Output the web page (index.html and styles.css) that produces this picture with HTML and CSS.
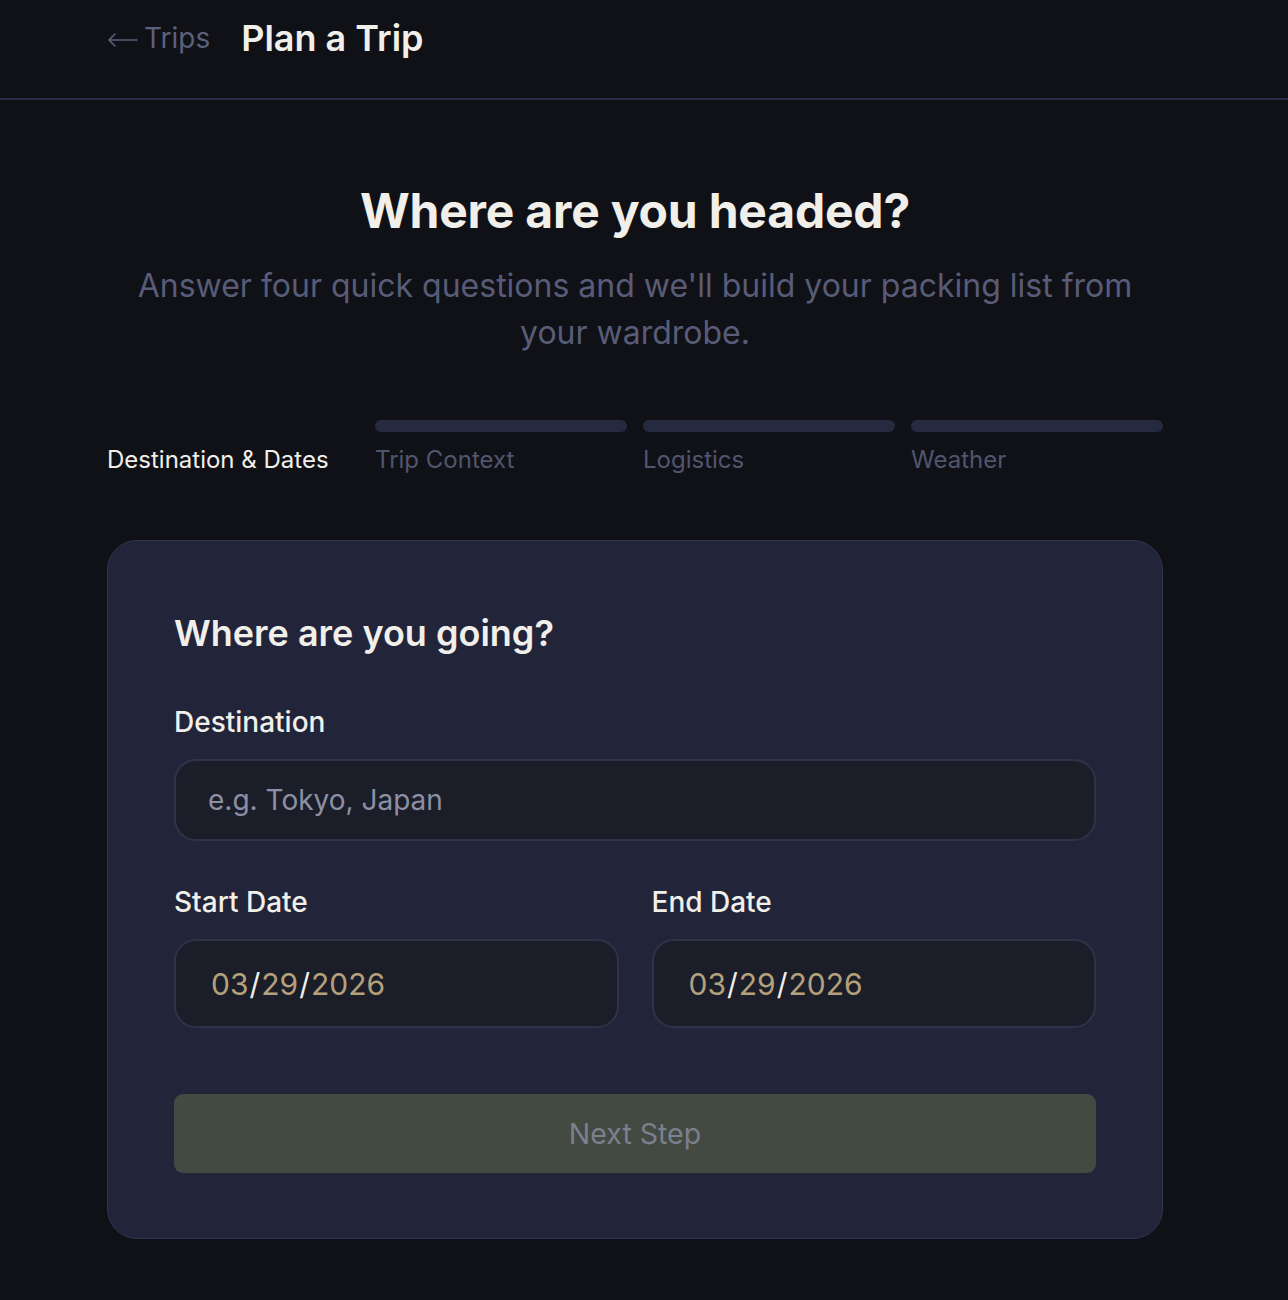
FILE: index.html
```html
<!DOCTYPE html>
<html lang="en">
<head>
<meta charset="utf-8">
<title>Plan a Trip</title>
<link rel="stylesheet" href="styles.css">
</head>
<body>
<header class="topbar">
  <div class="topbar-inner">
    <a class="back" href="#"><svg class="arrow" width="31" height="14" viewBox="0 0 31 14" aria-hidden="true"><path d="M30 7H2M8 1L2 7l6 6" fill="none" stroke="currentColor" stroke-width="1.6" stroke-linecap="round" stroke-linejoin="round"/></svg><span>Trips</span></a>
    <h1 class="page-title">Plan a Trip</h1>
  </div>
</header>
<main class="main">
  <section class="intro">
    <h2 class="intro-title">Where are you headed?</h2>
    <p class="intro-text">Answer four quick questions and we'll build your packing list from your wardrobe.</p>
  </section>
  <ol class="steps">
    <li class="step step-active"><span class="bar"></span><span class="step-label">Destination &amp; Dates</span></li>
    <li class="step"><span class="bar"></span><span class="step-label">Trip Context</span></li>
    <li class="step"><span class="bar"></span><span class="step-label">Logistics</span></li>
    <li class="step"><span class="bar"></span><span class="step-label">Weather</span></li>
  </ol>
  <form class="card">
    <h3 class="card-title">Where are you going?</h3>
    <div class="field">
      <label class="label" for="dest">Destination</label>
      <div class="input input-text" id="dest"><span class="placeholder">e.g. Tokyo, Japan</span></div>
    </div>
    <div class="row">
      <div class="field">
        <label class="label">Start Date</label>
        <div class="input input-date"><span class="d">03</span><span class="sl">/</span><span class="d">29</span><span class="sl">/</span><span class="d">2026</span></div>
      </div>
      <div class="field">
        <label class="label">End Date</label>
        <div class="input input-date"><span class="d">03</span><span class="sl">/</span><span class="d">29</span><span class="sl">/</span><span class="d">2026</span></div>
      </div>
    </div>
    <button type="button" class="next">Next Step</button>
  </form>
</main>
</body>
</html>
```

FILE: styles.css
```css
* { box-sizing: border-box; }
html, body { margin: 0; padding: 0; }
body {
  background: #101116;
  font-family: Inter, "Noto Sans", sans-serif;
  color: #f1efe9;
  width: 1288px;
  min-height: 1300px;
}
.topbar {
  height: 100px;
  border-bottom: 2px solid #2b2e44;
}
.topbar-inner {
  padding-left: 107px;
  height: 76px;
  display: flex;
  align-items: center;
  gap: 31px;
}
.back {
  color: #5b607c;
  text-decoration: none;
  font-size: 28px;
  display: flex;
  align-items: center;
  gap: 6px;
}
.arrow { display: block; margin-top: 3px; }
.page-title {
  margin: 0;
  font-size: 36px;
  font-weight: 600;
  color: #f1efe9;
  letter-spacing: 0;
}
.main {
  width: 1056px;
  margin-left: 107px;
}
.intro {
  text-align: center;
  padding-top: 82px;
}
.intro-title {
  margin: 0;
  font-size: 48px;
  font-weight: 700;
  line-height: 58px;
  color: #f1efe9;
  letter-spacing: -0.2px;
}
.intro-text {
  margin: 22px 0 0;
  font-size: 32px;
  line-height: 47px;
  color: #585c78;
  padding: 0 20px;
}
.steps {
  list-style: none;
  margin: 64px 0 0;
  padding: 0;
  display: grid;
  grid-template-columns: repeat(4, 1fr);
  gap: 16px;
}
.step {
  display: flex;
  flex-direction: column;
  gap: 14px;
}
.bar {
  display: block;
  height: 12px;
  border-radius: 6px;
  background: #252a40;
}
.step-active .bar { background: #101116; }
.step-label {
  font-size: 24px;
  color: #51556e;
  line-height: 28px;
}
.step-active .step-label { color: #f1efe9; }
.card {
  margin-top: 66px;
  background: #22253a;
  border: 1px solid #303450;
  border-radius: 30px;
  padding: 70px 66px 65px;
  display: flex;
  flex-direction: column;
}
.card-title {
  margin: 0;
  font-size: 36px;
  font-weight: 600;
  line-height: 44px;
  color: #f1efe9;
}
.field {
  display: flex;
  flex-direction: column;
  flex: 1;
}
.card-title + .field { margin-top: 52px; }
.label {
  font-size: 28px;
  font-weight: 500;
  line-height: 30px;
  color: #f1efe9;
}
.input {
  margin-top: 22px;
  background: #1b1d29;
  border: 2px solid #2f3249;
  border-radius: 22px;
  display: flex;
  align-items: center;
}
.input-text {
  height: 82px;
  padding-left: 32px;
}
.placeholder {
  font-size: 28px;
  color: #8c90a4;
}
.row {
  display: flex;
  gap: 33px;
  margin-top: 46px;
}
.input-date {
  height: 89px;
  padding-left: 35px;
  font-size: 30px;
  letter-spacing: 0;
}
.d { color: #b5a07c; }
.sl { color: #f1efe9; padding: 0 1px; }
.next {
  margin-top: 66px;
  height: 79px;
  border: none;
  border-radius: 9px;
  background: #434a42;
  color: #7b808e;
  font-family: Inter, "Noto Sans", sans-serif;
  font-size: 28.5px;
  cursor: default;
}
```
